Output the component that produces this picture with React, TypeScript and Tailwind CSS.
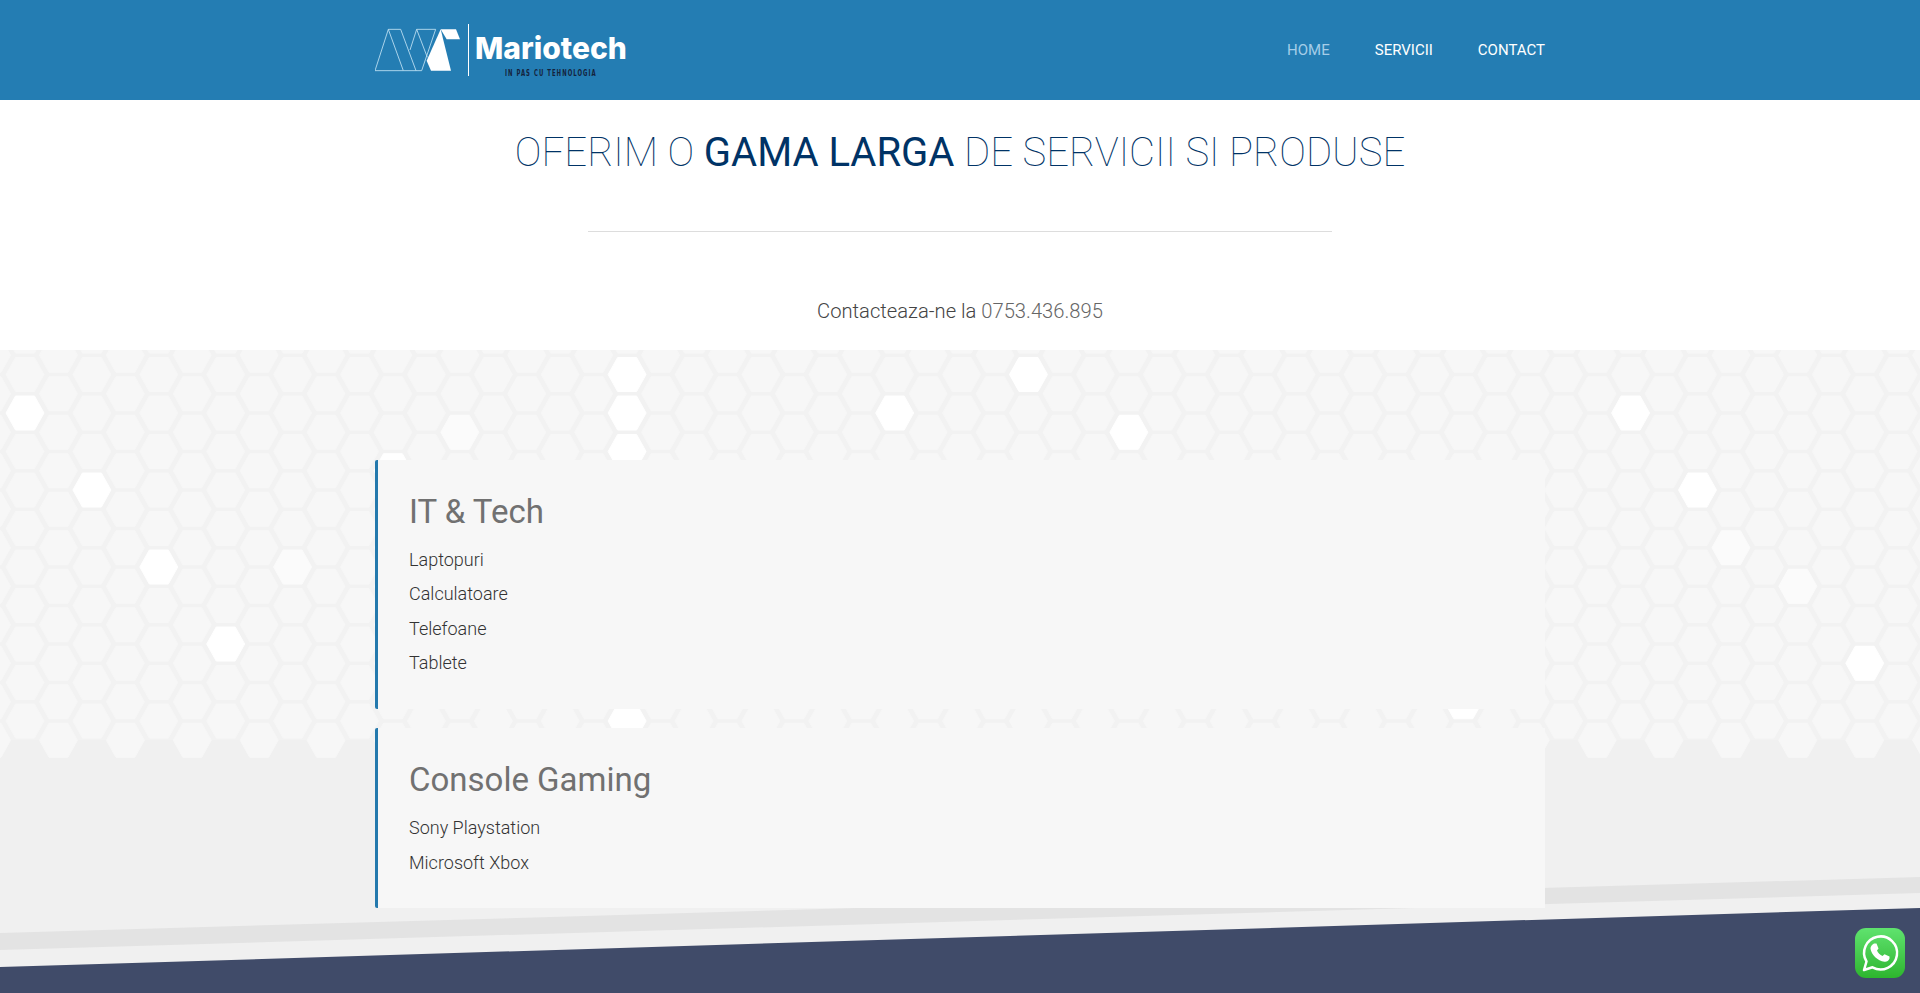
const COL = 33.45;
const ROW = 38.5;

// highlighted cells of the honeycomb, as "column:row"
const WHITE = new Set([
	'0:0', '2:2', '4:4', '6:6', '11:1', '18:-1', '18:0', '18:1', '18:8',
	'26:0', '30:-1', '33:0', '43:7', '48:0', '50:2', '55:6',
]);
const FAINT = new Set(['8:4', '13:0', '51:3', '53:4']);

function Honeycomb() {
	const cells = [];
	for (let k = -1; k < 58; k++) {
		for (let n = -2; n < 10; n++) {
			const x = 25 + COL * k;
			const y = 413 + ROW * n + (k % 2 !== 0 ? ROW / 2 : 0) - 350;
			if (y > 395) continue;
			const id = `${k}:${n}`;
			const points = `${x - 19},${y} ${x - 9.5},${y - 17} ${x + 9.5},${y - 17} ${x + 19},${y} ${x + 9.5},${y + 17} ${x - 9.5},${y + 17}`;
			const fill = WHITE.has(id) ? '#ffffff' : FAINT.has(id) ? '#fbfbfb' : '#f7f7f7';
			cells.push(
				<polygon
					key={id}
					points={points}
					fill={fill}
					stroke={fill}
					strokeLinejoin="round"
				/>,
			);
		}
	}
	return <g>{cells}</g>;
}

function Background() {
	return (
		<svg
			className="absolute left-0 top-0 w-[1920px] h-[643px]"
			viewBox="0 0 1920 643"
			aria-hidden="true">
			<rect
				width="1920"
				height="390"
				fill="#f2f2f2"
			/>
			<Honeycomb />
			<polygon
				points="0,583 1920,527 1920,543 0,600"
				fill="#e3e3e3"
			/>
			<polygon
				points="0,617 1920,558 1920,643 0,643"
				fill="#404b69"
			/>
		</svg>
	);
}

function Logo() {
	return (
		<div className="flex items-start w-[270px] h-[60px]">
			<svg
				className="w-[88px] h-[60px]"
				viewBox="15 0 264 180"
				aria-hidden="true">
				<g
					fill="none"
					stroke="#c5e4f5"
					strokeWidth="2.5">
					<path d="M15 152 L55 28 L92 28 L138 152 L100 152 L55 28" />
					<path d="M15 152 L100 152" />
					<path d="M120 90 L140 28 L197 28 L155 152 L138 152" />
					<path d="M140 28 L172 112" />
				</g>
				<path
					d="M170 122 L212 28 L243 152 L183 152 Z"
					fill="#ffffff"
				/>
				<path
					d="M212 28 L258 28 L270 58 L230 58 Z"
					fill="#ffffff"
				/>
			</svg>
			<div className="w-px h-[52px] mt-[4px] ml-[5px] bg-white"></div>
			<div className="ml-[6px]">
				<p className="font-['Inter'] font-extrabold text-[30px] leading-[34px] mt-[11px] text-white">
					Mariotech
				</p>
				<p className="font-['DejaVu_Sans_Condensed','Liberation_Sans',sans-serif] font-bold text-[9px] leading-[10px] mt-[3px] ml-[30px] tracking-[1.6px] whitespace-nowrap origin-left scale-x-[0.66] text-[#14233c]">
					IN PAS CU TEHNOLOGIA
				</p>
			</div>
		</div>
	);
}

function WhatsApp() {
	return (
		<a className="fixed right-[15px] bottom-[15px] w-[50px] h-[50px] rounded-[11px] bg-gradient-to-b from-[#5fe36e] to-[#2db52d]">
			<svg
				className="w-[50px] h-[50px]"
				viewBox="0 0 50 50"
				aria-hidden="true">
				<path
					d="M9 42 L11.5 33.5 A16.5 16.5 0 1 1 17.5 39.3 Z"
					fill="none"
					stroke="#ffffff"
					strokeWidth="2.5"
					strokeLinejoin="round"
				/>
				<path
					d="M19.5 15.5 l2 0 l2 5 l-1.5 2 c1 2.5 3 4.5 5.5 5.5 l2-1.7 l5 2.3 v2 c-1 2.5-3 3.5-5 3.2 c-7-1-13-7-14-13 c-.2-2 1.5-4.5 3.5-5.3 z"
					fill="#ffffff"
				/>
			</svg>
		</a>
	);
}

function Card({ title, items }: { title: string; items: string[] }) {
	return (
		<div className="bg-[#f7f7f7] border-l-[3px] border-[#2479ad] rounded-l-[2px] pl-[31px] pt-[32px] pb-[28px]">
			<h2 className="text-[33px] leading-[40px] text-[#717171]">{title}</h2>
			<ul className="mt-[11px]">
				{items.map((item) => (
					<li
						key={item}
						className="text-[18px] font-light leading-[34.4px] text-[#333333]">
						{item}
					</li>
				))}
			</ul>
		</div>
	);
}

function App() {
	return (
		<div className="font-['Roboto',sans-serif] h-[993px] overflow-hidden bg-white">
			{/* <Header> */}
			<header className="h-[100px] bg-[#247db3]">
				<div className="w-[1170px] h-full mx-auto flex items-center justify-between">
					<Logo />
					<nav className="flex gap-[45px] text-[15px] text-white">
						<a className="text-[#a5cde8]">HOME</a>
						<a>SERVICII</a>
						<a>CONTACT</a>
					</nav>
				</div>
			</header>
			{/* </Header> */}

			{/* <Intro> */}
			<section className="h-[250px] pt-[29px] text-center">
				<h1 className="text-[40px] leading-[48px] font-[150] text-[#003366]">
					OFERIM O <span className="font-normal">GAMA LARGA</span> DE SERVICII SI PRODUSE
				</h1>
				<div className="w-[744px] h-px mt-[54px] mx-auto bg-[#dddddd]"></div>
				<p className="mt-[65px] text-[20.2px] leading-[28px] font-light text-[#444444]">
					Contacteaza-ne la <span className="text-[#666666]">0753.436.895</span>
				</p>
			</section>
			{/* </Intro> */}

			{/* <Services> */}
			<section className="relative h-[643px] pt-[110px] bg-[#f0f0f0]">
				<Background />
				<div className="relative w-[1170px] mx-auto flex flex-col gap-[19.5px]">
					<Card
						title="IT & Tech"
						items={['Laptopuri', 'Calculatoare', 'Telefoane', 'Tablete']}
					/>
					<Card
						title="Console Gaming"
						items={['Sony Playstation', 'Microsoft Xbox']}
					/>
				</div>
			</section>
			{/* </Services> */}

			<WhatsApp />
		</div>
	);
}

export default App;
